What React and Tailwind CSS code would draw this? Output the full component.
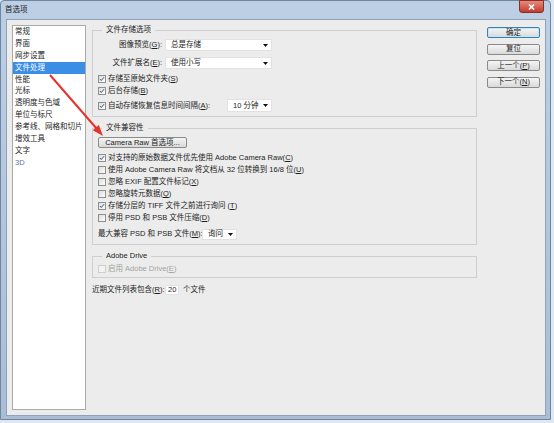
import React from "react";

const SIDEBAR = [
  "常规",
  "界面",
  "网步设置",
  "文件处理",
  "性能",
  "光标",
  "透明度与色域",
  "单位与标尺",
  "参考线、网格和切片",
  "增效工具",
  "文字",
  "3D",
];

function Check({ checked, disabled }) {
  return (
    <span
      className={`w-[8px] h-[8px] shrink-0 border flex items-center justify-center ${
        disabled
          ? "border-[#cfcfcf] bg-[#f3f3f3]"
          : "border-[#8e8f8f] bg-gradient-to-br from-[#dcdcdc] to-white"
      }`}
    >
      {checked && (
        <svg width="8" height="8" viewBox="0 0 8 8">
          <path d="M1.3 4.1 L3.1 6 L6.7 1.6" fill="none" stroke="#2f4f86" strokeWidth="1.3" />
        </svg>
      )}
    </span>
  );
}

function Select({ value, className }) {
  return (
    <div className={`shrink-0 bg-white border border-[#e2e2e2] flex items-center justify-between pl-[5px] pr-[3px] ${className}`}>
      <span>{value}</span>
      <svg width="5" height="3" viewBox="0 0 5 3">
        <path d="M0 0 H5 L2.5 3 Z" fill="#111" />
      </svg>
    </div>
  );
}

function Btn({ children, def, className = "" }) {
  return (
    <div
      className={`h-[11px] rounded-[2px] border flex items-center justify-center bg-gradient-to-b from-[#f5f5f5] to-[#d9d9d9] ${
        def ? "border-[#3c80b0] shadow-[inset_0_0_0_1px_#c3e6f7]" : "border-[#8a8a8a]"
      } ${className}`}
    >
      {children}
    </div>
  );
}

function CheckRow({ checked, disabled, children }) {
  return (
    <div className="h-[12px] flex items-center">
      <Check checked={checked} disabled={disabled} />
      <span className={`ml-[2px] ${disabled ? "text-[#a3a3a3]" : ""}`}>{children}</span>
    </div>
  );
}

function Group({ title, className = "", children }) {
  return (
    <fieldset className={`border border-[#cfcfcf] pl-[5px] ${className}`}>
      <legend className="ml-[4px] px-[4px] leading-[12px]">{title}</legend>
      {children}
    </fieldset>
  );
}

export default function App() {
  return (
    <div className="w-[554px] h-[423px] relative overflow-hidden whitespace-nowrap bg-[#dfe7f0] text-[7.5px] leading-[12px] text-[#1d1d1d] font-['Liberation_Sans','Noto_Sans_CJK_SC',sans-serif]">
      <div className="w-[551px] h-[420px] flex flex-col bg-gradient-to-b from-[#bccfe4] to-[#a9bdd4] border border-[#6f86a2] rounded-t-[4px]">
        <div className="h-[18px] flex items-start justify-between pl-[4px]">
          <span className="mt-[3px]">首选项</span>
          <div className="w-[25px] h-[13px] mr-[6px] -mt-px rounded-b-[3px] border border-[#8a2f28] bg-gradient-to-b from-[#e48b7e] to-[#c2392c] flex items-center justify-center">
            <svg width="7" height="6" viewBox="0 0 7 6">
              <path d="M1 0.5 L6 5.5 M6 0.5 L1 5.5" stroke="#fff" strokeWidth="1.6" />
            </svg>
          </div>
        </div>

        <div className="flex-1 ml-[5px] mr-[4px] mb-[3px] bg-[#ececec] border border-[#8fa2b8] flex">
          <div className="ml-[5px] mt-[5px] mb-[5px] w-[74px] bg-white border border-[#a9a9a9] flex flex-col">
            {SIDEBAR.map((s) => (
              <div
                key={s}
                className={`h-[11.9px] leading-[11.9px] pl-[2px] ${
                  s === "文件处理" ? "bg-[#3a8ee6] text-white" : s === "3D" ? "text-[#5873a6]" : ""
                }`}
              >
                {s}
              </div>
            ))}
          </div>

          <div className="ml-[6px] mt-[4px] w-[385px] flex flex-col">
            <Group title="文件存储选项" className="pb-[4px]">
              <div className="mt-[3px] h-[12px] flex items-center">
                <span className="w-[64px] text-right">图像预览(<u>G</u>):</span>
                <Select value="总是存储" className="ml-[3px] w-[107px] h-[12px]" />
              </div>
              <div className="mt-[6px] h-[12px] flex items-center">
                <span className="w-[64px] text-right">文件扩展名(<u>E</u>):</span>
                <Select value="使用小写" className="ml-[3px] w-[107px] h-[12px]" />
              </div>
              <div className="mt-[4px]">
                <CheckRow checked>存储至原始文件夹(<u>S</u>)</CheckRow>
                <CheckRow checked>后台存储(<u>B</u>)</CheckRow>
              </div>
              <div className="mt-[2px] h-[13px] flex items-center">
                <Check checked />
                <span className="ml-[2px] w-[119px]">自动存储恢复信息时间间隔(<u>A</u>):</span>
                <Select value="10 分钟" className="w-[45px] h-[13px]" />
              </div>
            </Group>

            <Group title="文件兼容性" className="mt-[5px] pb-[4px]">
              <Btn className="mt-[3px] w-[89px]">Camera Raw 首选项...</Btn>
              <div className="mt-[4px]">
                <CheckRow checked>对支持的原始数据文件优先使用 Adobe Camera Raw(<u>C</u>)</CheckRow>
                <CheckRow>使用 Adobe Camera Raw 将文档从 32 位转换到 16/8 位(<u>U</u>)</CheckRow>
                <CheckRow>忽略 EXIF 配置文件标记(<u>X</u>)</CheckRow>
                <CheckRow>忽略旋转元数据(<u>Q</u>)</CheckRow>
                <CheckRow checked>存储分层的 TIFF 文件之前进行询问 (<u>T</u>)</CheckRow>
                <CheckRow>停用 PSD 和 PSB 文件压缩(<u>D</u>)</CheckRow>
              </div>
              <div className="mt-[4px] h-[12px] flex items-center">
                <span className="w-[104px]">最大兼容 PSD 和 PSB 文件(<u>M</u>):</span>
                <Select value="询问" className="w-[35px] h-[11px]" />
              </div>
            </Group>

            <Group title="Adobe Drive" className="mt-[5px] pb-[2px]">
              <div className="mt-[1px]">
                <CheckRow disabled>启用 Adobe Drive(<u>E</u>)</CheckRow>
              </div>
            </Group>

            <div className="mt-[6px] h-[12px] flex items-center">
              <span className="w-[73px]">近期文件列表包含(<u>R</u>):</span>
              <div className="w-[14px] h-[10px] bg-white border border-[#e2e2e2] flex items-center pl-[2px]">20</div>
              <span className="ml-[4px]">个文件</span>
            </div>
          </div>

          <div className="ml-[10px] mt-[7px] w-[53px] flex flex-col gap-[5.5px]">
            <Btn def>确定</Btn>
            <Btn>复位</Btn>
            <Btn>上一个(<u>P</u>)</Btn>
            <Btn>下一个(<u>N</u>)</Btn>
          </div>
        </div>
      </div>

      <svg className="absolute inset-0 pointer-events-none" width="554" height="423" viewBox="0 0 554 423">
        <line x1="50" y1="75" x2="97" y2="129" stroke="#e5322b" strokeWidth="2" />
        <polygon points="103,136 92.8,130.3 98.8,125.1" fill="#e5322b" />
      </svg>
    </div>
  );
}
